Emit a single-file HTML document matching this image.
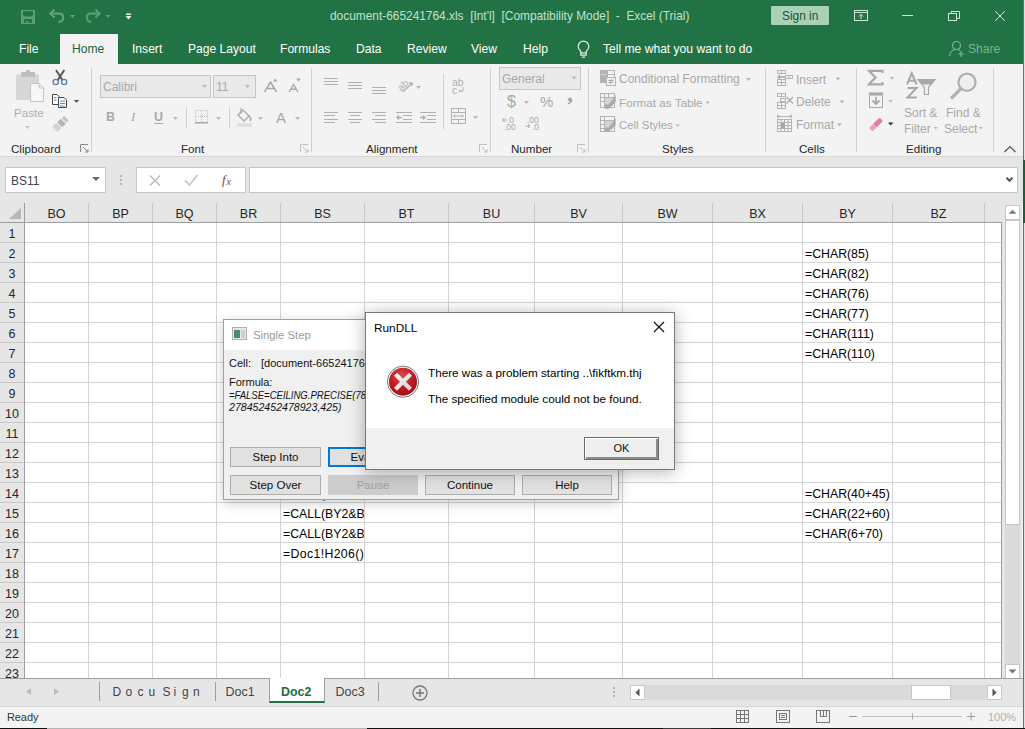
<!DOCTYPE html>
<html><head><meta charset="utf-8">
<style>
*{margin:0;padding:0;box-sizing:border-box}
html,body{width:1025px;height:729px;overflow:hidden;background:#f3f3f3;font-family:"Liberation Sans",sans-serif;position:relative}
.a{position:absolute;white-space:nowrap}
.tt{color:#fff;font-size:12.5px;top:42px}
.gl{font-size:11.5px;color:#262626}
.dis{color:#a6a6a6;font-size:12px}
.rn{left:0;width:24px;height:20px;font-size:12.5px;color:#262626;text-align:center;line-height:20px}
.cn{top:204px;height:20px;font-size:12.5px;color:#262626;text-align:center;line-height:20px}
.cell{font-size:12.3px;color:#000;line-height:20px;height:20px}
.sep{top:68px;width:1px;height:84px;background:#d0d0d0}
.gl{top:141.5px;font-size:11.6px;color:#262626}
.dis{color:#a8a8a8;font-size:12px}
.tt{font-size:12.1px;top:42px}
.tab{top:685px;font-size:12px;color:#444}
.dlg{font-size:11px;color:#111}
.btn{height:20px;background:#e1e1e1;border:1px solid #adadad;font-size:11.5px;color:#111;text-align:center;line-height:18px}

</style></head><body>
<!-- ===== title bar ===== -->
<div class="a" style="left:0;top:0;width:1023px;height:64px;background:#217346"></div>
<svg class="a" style="left:0;top:0" width="140" height="34">
 <path fill-rule="evenodd" fill="#5c9f77" d="M21 10 H35 V24 H21 Z M23 11.3 H33 V15.3 L32 16.5 H24 L23 15.3 Z M24 19 H32 V22.8 H28.2 V21 H26.2 V22.8 H24 Z"/>
 <path d="M50.5 13.5 H59 Q63.2 13.5 63.2 17.5 Q63.2 21.5 58.5 22" fill="none" stroke="#62a67d" stroke-width="1.9"/>
 <path d="M54.5 9.5 L50.3 13.5 L54.5 17.5" fill="none" stroke="#62a67d" stroke-width="1.9"/>
 <path d="M70 15 h5 l-2.5 3z" fill="#62a67d"/>
 <path d="M99.5 13.5 H91 Q86.8 13.5 86.8 17.5 Q86.8 21.5 91.5 22" fill="none" stroke="#5c9f77" stroke-width="1.9"/>
 <path d="M95.5 9.5 L99.7 13.5 L95.5 17.5" fill="none" stroke="#5c9f77" stroke-width="1.9"/>
 <path d="M105.8 15 h5 l-2.5 3z" fill="#5c9f77"/>
 <rect x="126" y="13.5" width="5" height="1.3" fill="#fff"/>
 <path d="M125.5 16 h6 l-3 3.5z" fill="#fff"/>
</svg>
<div class="a" style="left:330px;top:9px;font-size:11.9px;color:#c4e0cc">document-665241764.xls&nbsp; [Int'l]&nbsp; [Compatibility Mode]&nbsp; -&nbsp; Excel (Trial)</div>
<div class="a" style="left:771px;top:6px;width:58px;height:19px;background:#a8d1b6;border-radius:1px"></div>
<div class="a" style="left:782px;top:9px;font-size:11.9px;color:#1f5234">Sign in</div>
<svg class="a" style="left:840px;top:0" width="182" height="34">
 <g fill="none" stroke="#cfe5d7" stroke-width="1">
  <rect x="14.5" y="10.5" width="13" height="10"/>
  <path d="M14.5 12.5 H27.5"/>
  <path d="M21 19 V14.5 M18.8 16.5 L21 14.3 L23.2 16.5"/>
  <path d="M62 15.5 H73"/>
  <rect x="108.5" y="13.5" width="8" height="7"/>
  <path d="M111 13.5 V11.5 H119.5 V18.5 H116.5"/>
  <path d="M155 11 L165 21 M165 11 L155 21"/>
 </g>
</svg>
<!-- tabs -->
<div class="a" style="left:60px;top:34px;width:58px;height:31px;background:#f3f3f3"></div>
<div class="a tt" style="left:19px">File</div>
<div class="a tt" style="left:72px;color:#235f3d">Home</div>
<div class="a tt" style="left:132px">Insert</div>
<div class="a tt" style="left:188px">Page Layout</div>
<div class="a tt" style="left:280px">Formulas</div>
<div class="a tt" style="left:356px">Data</div>
<div class="a tt" style="left:407px">Review</div>
<div class="a tt" style="left:471px">View</div>
<div class="a tt" style="left:523px">Help</div>
<svg class="a" style="left:574px;top:38px" width="20" height="22">
 <path d="M6.8 13.5 C5.3 12 4.2 10.5 4.2 8.5 A5.3 5.3 0 0 1 14.8 8.5 C14.8 10.5 13.7 12 12.2 13.5 V14.8 H6.8 Z M6.8 14.8 V17.2 H12.2 V14.8 M8 19.2 H11" fill="none" stroke="#dff2e5" stroke-width="1.2"/>
</svg>
<div class="a tt" style="left:603px">Tell me what you want to do</div>
<svg class="a" style="left:948px;top:40px" width="18" height="18">
 <circle cx="8.5" cy="5.5" r="4" fill="none" stroke="#7fb293" stroke-width="1.2"/>
 <path d="M1.5 16 C2 11.5 5 9.5 8.5 9.5 C10 9.5 11 9.8 12 10.5 M13 11 V17 M10 14 H16" fill="none" stroke="#7fb293" stroke-width="1.2"/>
</svg>
<div class="a tt" style="left:968px;color:#7fb293">Share</div>

<!-- ===== ribbon ===== -->
<div class="a" style="left:0;top:64px;width:1023px;height:93px;background:#f3f3f3;border-bottom:1px solid #d6d6d6"></div>
<!-- group separators -->
<div class="a sep" style="left:91px"></div>
<div class="a sep" style="left:311px"></div>
<div class="a sep" style="left:490px"></div>
<div class="a sep" style="left:588px"></div>
<div class="a sep" style="left:765px"></div>
<div class="a sep" style="left:856px"></div>
<div class="a sep" style="left:993px"></div>
<!-- group labels -->
<div class="a gl" style="left:11px">Clipboard</div>
<div class="a gl" style="left:181px">Font</div>
<div class="a gl" style="left:366px">Alignment</div>
<div class="a gl" style="left:511px">Number</div>
<div class="a gl" style="left:662px">Styles</div>
<div class="a gl" style="left:799px">Cells</div>
<div class="a gl" style="left:906px">Editing</div>
<!-- launchers -->
<svg class="a" style="left:0;top:140px" width="600" height="16">
 <g fill="none" stroke="#8a8a8a" stroke-width="1">
  <path d="M80.5 12 V4.5 H88"/><path d="M83 7 L88 12 M85 12 H88 V9"/>
  <path d="M300.5 12 V4.5 H308" stroke="#c0c0c0"/><path d="M303 7 L308 12 M305 12 H308 V9" stroke="#c0c0c0"/>
  <path d="M479.5 12 V4.5 H487" stroke="#c0c0c0"/><path d="M482 7 L487 12 M484 12 H487 V9" stroke="#c0c0c0"/>
  <path d="M577.5 12 V4.5 H585" stroke="#c0c0c0"/><path d="M580 7 L585 12 M582 12 H585 V9" stroke="#c0c0c0"/>
 </g>
</svg>
<svg class="a" style="left:1000px;top:142px" width="20" height="14"><path d="M4.5 10 L10 4.5 L15.5 10" fill="none" stroke="#555" stroke-width="1.2"/></svg>

<!-- clipboard group -->
<svg class="a" style="left:0;top:64px" width="92" height="80">
 <rect x="16" y="10" width="23" height="26" rx="2" fill="#d6d6d6"/>
 <rect x="21" y="8" width="14" height="5" rx="1" fill="#bdbdbd"/>
 <rect x="26" y="6" width="4" height="3" rx="1" fill="#bdbdbd"/>
 <path d="M30.5 19.5 H39 L43.5 24 V37.5 H30.5 Z" fill="#f7f7f7" stroke="#c4c4c4"/>
 <path d="M39 19.5 V24 H43.5" fill="none" stroke="#c4c4c4"/>
 <path d="M25 62 h5 l-2.5 3z" fill="#c4c4c4"/>
 <!-- scissors -->
 <path d="M56 6 L61.5 14.5 L62.5 16.5 M64.3 6 L58.8 14.5 L57.8 16.5" stroke="#555" stroke-width="1.9" fill="none"/>
 <circle cx="55.7" cy="18" r="2.6" fill="none" stroke="#5b82ad" stroke-width="1.4"/>
 <circle cx="64.1" cy="18" r="2.6" fill="none" stroke="#5b82ad" stroke-width="1.4"/>
 <!-- copy -->
 <path d="M52.5 30.5 H57 L59 32.5 V40.5 H52.5 Z" fill="#fff" stroke="#444"/>
 <path d="M58.5 33.5 H64 L66.5 36 V43.5 H58.5 Z" fill="#fff" stroke="#444"/>
 <path d="M54 33.5 H56.5 M54 36 H56.5" stroke="#4f81bd" stroke-width="1"/>
 <path d="M60 37 H65 M60 39.5 H65 M60 42 H65" stroke="#4f81bd" stroke-width="0.9"/>
 <path d="M74 36 h5 l-2.5 2.8z" fill="#444"/>
 <!-- format painter -->
 <path d="M63 53 L67.5 57.5" stroke="#c4c4c4" stroke-width="3.2"/>
 <path d="M59 56.5 L64 61.5" stroke="#b4b4b4" stroke-width="5"/>
 <path d="M54 61 L59.5 66.5 L57 68 L52.5 63.5 Z" fill="#d8d8d8"/>
 <path d="M56.5 59 L61.5 64 L58.5 66.5 L53.5 61.5 Z" fill="#d0d0d0"/>
</svg>
<div class="a dis" style="left:14px;top:106px;font-size:11.6px;color:#b0b0b0">Paste</div>

<!-- font group -->
<div class="a" style="left:100px;top:75px;width:111px;height:23px;background:#e9e9e9;border:1px solid #c6c6c6"></div>
<div class="a dis" style="left:103px;top:80px">Calibri</div>
<div class="a" style="left:213px;top:75px;width:43px;height:23px;background:#e9e9e9;border:1px solid #c6c6c6"></div>
<div class="a dis" style="left:216px;top:80px">11</div>
<svg class="a" style="left:92px;top:64px" width="220" height="80">
 <g fill="#b8b8b8">
  <path d="M110 21 h5 l-2.5 3z"/><path d="M153 21 h5 l-2.5 3z"/>
 </g>
 <path d="M172.5 28 L178.5 18 L184.5 28 M174.8 24.5 H182.2" fill="none" stroke="#a8a8a8" stroke-width="1.6"/>
 <path d="M181 17.5 h4.5 l-2.25 -3z" fill="#a8a8a8"/>
 <path d="M197 28 L201.5 20.5 L206 28 M198.7 25.3 H204.3" fill="none" stroke="#a8a8a8" stroke-width="1.4"/>
 <path d="M204 14.5 h5 l-2.5 3z" fill="#a8a8a8"/>
 <text x="14" y="57" font-family="Liberation Sans" font-size="12.5" font-weight="bold" fill="#a8a8a8">B</text>
 <text x="39" y="57" font-family="Liberation Serif" font-size="13" font-style="italic" fill="#a8a8a8">I</text>
 <text x="62" y="57" font-family="Liberation Sans" font-size="12.5" font-weight="bold" fill="#a8a8a8">U</text>
 <rect x="62" y="59" width="9" height="1" fill="#a8a8a8"/>
 <path d="M81 53 h5 l-2.5 3z" fill="#b8b8b8"/>
 <rect x="94" y="43" width="1" height="21" fill="#d0d0d0"/>
 <rect x="103.5" y="46.5" width="12" height="12" fill="none" stroke="#c0c0c0" stroke-dasharray="1 1"/>
 <path d="M109.5 47 V58 M104 52.5 H115" stroke="#c0c0c0" stroke-dasharray="1 1"/>
 <rect x="103" y="58" width="13" height="1.5" fill="#a8a8a8"/>
 <path d="M124 53 h5 l-2.5 3z" fill="#b8b8b8"/>
 <rect x="137" y="43" width="1" height="21" fill="#d0d0d0"/>
 <path d="M146 51 L151 46 L157 52 L152 57 Z" fill="none" stroke="#a8a8a8" stroke-width="1.3"/>
 <path d="M149 44 V50" stroke="#a8a8a8" stroke-width="1.2"/>
 <path d="M157 52 Q160 55 158 57" fill="none" stroke="#a8a8a8" stroke-width="1.5"/>
 <rect x="145" y="59" width="15" height="4" fill="#e0e0e0"/>
 <path d="M166 53 h5 l-2.5 3z" fill="#b8b8b8"/>
 <text x="184" y="59" font-family="Liberation Sans" font-size="15" fill="#a8a8a8">A</text>
 <path d="M203 53 h5 l-2.5 3z" fill="#b8b8b8"/>
</svg>

<!-- alignment group -->
<svg class="a" style="left:312px;top:64px" width="178" height="80">
 <g stroke="#b0b0b0" stroke-width="1" fill="none">
  <path d="M12 14.5 H26 M12 17.5 H26 M12 20.5 H26"/>
  <path d="M36 18.5 H50 M36 21.5 H50 M36 24.5 H50"/>
  <path d="M60 23.5 H74 M60 26.5 H74 M60 29.5 H74"/>
  <path d="M12 48.5 H26 M12 51.5 H23 M12 55.5 H26 M12 58.5 H23"/>
  <path d="M36 48.5 H50 M38 51.5 H48 M36 55.5 H50 M38 58.5 H48"/>
  <path d="M60 48.5 H74 M63 51.5 H74 M60 55.5 H74 M63 58.5 H74"/>
  <path d="M84 48.5 H100 M91 51.5 H100 M91 55.5 H100 M84 58.5 H100"/>
  <path d="M108 48.5 H124 M115 51.5 H124 M115 55.5 H124 M108 58.5 H124"/>
  <path d="M85 53.5 H90 M87 51.5 L85 53.5 L87 55.5" stroke-width="1.4"/>
  <path d="M108 53.5 H113 M111 51.5 L113 53.5 L111 55.5" stroke-width="1.4"/>
  <path d="M91 28 L100 19 M97 19 H100 V22" stroke-width="1.4"/>
  <rect x="139.5" y="44.5" width="14" height="15"/>
  <path d="M139.5 48.5 H153.5 M139.5 55.5 H153.5 M146.5 44.5 V48.5 M146.5 55.5 V59.5 M142 52 H151 M143 50.5 L141.5 52 L143 53.5 M150 50.5 L151.5 52 L150 53.5"/>
  <rect x="131" y="10" width="1" height="55" stroke="none" fill="#d0d0d0"/>
 </g>
 <text x="84" y="25" font-family="Liberation Sans" font-size="10" fill="#b0b0b0" transform="rotate(-45 90 20)">ab</text>
 <path d="M104 22 h5 l-2.5 3z" fill="#b8b8b8"/>
 <text x="140" y="22" font-family="Liberation Sans" font-size="10.5" fill="#b0b0b0">ab</text>
 <text x="140" y="30" font-family="Liberation Sans" font-size="10.5" fill="#b0b0b0">c</text>
 <path d="M151 23 V27 H147 M148.5 25.5 L147 27 L148.5 28.5" fill="none" stroke="#b0b0b0" stroke-width="1"/>
 <path d="M161 52 h5 l-2.5 3z" fill="#b8b8b8"/>
</svg>

<!-- number group -->
<div class="a" style="left:499px;top:67px;width:82px;height:23px;background:#e9e9e9;border:1px solid #c6c6c6"></div>
<div class="a dis" style="left:502px;top:72px">General</div>
<svg class="a" style="left:490px;top:64px" width="98" height="80">
 <path d="M81.5 12.5 h5 l-2.5 3z" fill="#b8b8b8"/>
 <text x="17" y="43" font-family="Liberation Sans" font-size="16" fill="#a8a8a8">$</text>
 <path d="M34 37 h5 l-2.5 3z" fill="#b8b8b8"/>
 <text x="50" y="42.5" font-family="Liberation Sans" font-size="15" fill="#a8a8a8">%</text>
 <circle cx="80" cy="35.6" r="2.1" fill="#a8a8a8"/><path d="M81.8 36 Q81.5 38.8 77.8 39.8" fill="none" stroke="#a8a8a8" stroke-width="1.5"/>
 <text x="17" y="59" font-family="Liberation Sans" font-size="8.5" fill="#a8a8a8">.0</text>
 <text x="14" y="65.5" font-family="Liberation Sans" font-size="8.5" fill="#a8a8a8">.00</text>
 <path d="M12.5 56 H17 M14.5 54 L12.5 56 L14.5 58" fill="none" stroke="#a8a8a8"/>
 <text x="37" y="59" font-family="Liberation Sans" font-size="8.5" fill="#a8a8a8">.00</text>
 <text x="42" y="65.5" font-family="Liberation Sans" font-size="8.5" fill="#a8a8a8">.0</text>
 <path d="M35.5 62 H40 M38 60 L40 62 L38 64" fill="none" stroke="#a8a8a8"/>
</svg>

<!-- styles group -->
<svg class="a" style="left:596px;top:64px" width="24" height="72">
 <g fill="none" stroke="#b4b4b4" stroke-width="1">
  <rect x="4.5" y="6.5" width="14" height="12"/>
  <path d="M11.5 6.5 V18.5 M4.5 10.5 H18.5 M4.5 14.5 H11"/>
 </g>
 <rect x="4" y="6" width="7" height="13" fill="#b4b4b4"/>
 <rect x="5" y="10" width="5" height="1" fill="#d8d8d8"/>
 <rect x="10.5" y="13.5" width="9" height="8" fill="#f3f3f3" stroke="#b4b4b4"/>
 <path d="M12.5 16.5 H17.5 M12.5 18.5 H17.5 M16 15 L14 20" stroke="#a0a0a0" stroke-width="0.9" fill="none"/>
 <g fill="none" stroke="#b4b4b4">
  <rect x="4.5" y="29.5" width="14" height="14"/>
  <path d="M4.5 33.5 H18.5 M4.5 37.5 H18.5 M8.5 29.5 V43.5 M12.5 29.5 V43.5"/>
  <rect x="4.5" y="52.5" width="14" height="15"/>
  <path d="M4.5 56.5 H18.5 M4.5 60.5 H14 M4.5 64.5 H10 M8.5 52.5 V67.5"/>
 </g>
 <rect x="9" y="34" width="8" height="8" fill="#d4d4d4"/>
 <rect x="9" y="57" width="8" height="8" fill="#d4d4d4"/>
 <path d="M19.7 31 V38 L13 44.8 H9.5 Z" fill="#ababab"/>
 <circle cx="10.5" cy="42.5" r="2.3" fill="#ababab"/>
 <path d="M19.7 54 V61 L13 67.8 H9.5 Z" fill="#ababab"/>
 <circle cx="10.5" cy="65.5" r="2.3" fill="#ababab"/>
</svg>
<div class="a dis" style="left:619px;top:72px">Conditional Formatting</div>
<div class="a dis" style="left:619px;top:96px;font-size:11.7px">Format as Table</div>
<div class="a dis" style="left:619px;top:119px;font-size:11.4px">Cell Styles</div>
<svg class="a" style="left:600px;top:64px" width="160" height="72">
 <g fill="#b8b8b8">
  <path d="M146 14 h5 l-2.5 3z"/><path d="M105.5 37.5 h4.5 l-2.25 2.6z"/><path d="M75.5 60.5 h4.5 l-2.25 2.6z"/>
 </g>
</svg>

<!-- cells group -->
<svg class="a" style="left:772px;top:64px" width="84" height="72">
 <g fill="none" stroke="#b4b4b4" stroke-width="1">
  <rect x="5.5" y="6.5" width="8" height="3"/><path d="M9.5 6.5 V9.5"/>
  <rect x="5.5" y="15.5" width="8" height="6"/><path d="M9.5 15.5 V21.5 M5.5 18.5 H13.5"/>
  <rect x="13.5" y="11.5" width="7" height="3"/><path d="M17 11.5 V14.5"/>
  <path d="M6 13 H13 M8 11 L6 13 L8 15" stroke="#a8a8a8" stroke-width="1.3"/>
  <rect x="5.5" y="29.5" width="8" height="3"/><path d="M9.5 29.5 V32.5"/>
  <rect x="8.5" y="34.5" width="5" height="3"/>
  <rect x="5.5" y="38.5" width="8" height="6"/><path d="M9.5 38.5 V44.5 M5.5 41.5 H13.5"/>
  <path d="M14.5 33 L21 39.5 M21 33 L14.5 39.5" stroke="#a8a8a8" stroke-width="1.2"/>
  <rect x="5.5" y="55.5" width="14" height="12"/>
  <path d="M5.5 58.5 H19.5 M5.5 61.5 H19.5 M5.5 64.5 H19.5 M9 55.5 V67.5 M12.5 55.5 V67.5 M16 55.5 V67.5"/>
  <path d="M6 52.5 H19 M5.5 50.5 V54 M19.5 50.5 V54 M7.5 51 L6 52.5 L7.5 54 M17.5 51 L19 52.5 L17.5 54"/>
 </g>
 <rect x="9" y="58.5" width="4" height="6" fill="#a8a8a8"/>
</svg>
<div class="a dis" style="left:796px;top:73px">Insert</div>
<div class="a dis" style="left:796px;top:95px">Delete</div>
<div class="a dis" style="left:796px;top:118px">Format</div>
<svg class="a" style="left:830px;top:64px" width="24" height="72">
 <g fill="#b8b8b8"><path d="M5.5 13.5 h5 l-2.5 3z"/><path d="M9.5 36.5 h5 l-2.5 3z"/><path d="M7 59.5 h5 l-2.5 3z"/></g>
</svg>

<!-- editing group -->
<svg class="a" style="left:860px;top:64px" width="134" height="72">
 <path d="M22.5 9 V6.8 H9 L15.5 13.5 L9 20.3 H22.5 V18" fill="none" stroke="#a8a8a8" stroke-width="2.2"/>
 <path d="M29.5 13 h5 l-2.5 2.8z" fill="#bdbdbd"/>
 <rect x="9.5" y="29.5" width="13" height="14" fill="none" stroke="#a8a8a8"/>
 <rect x="9" y="28.5" width="14" height="3" fill="#a8a8a8"/>
 <path d="M16 33 V40 M12.5 36.5 L16 40 L19.5 36.5" fill="none" stroke="#a8a8a8" stroke-width="1.8"/>
 <path d="M28 36 h5 l-2.5 2.8z" fill="#bdbdbd"/>
 <path d="M13 60 L18.5 54.5 Q19.5 53.5 20.5 54.5 L22 56 Q23 57 22 58 L16.5 63.5 Z" fill="#e07f98"/>
 <path d="M13 60 L16.5 63.5 L13.5 66.5 Q12.5 67.5 11.5 66.5 L10 65 Q9 64 10 63 Z" fill="#eda3b5"/>
 <path d="M28 58.5 h5.5 l-2.75 3z" fill="#333"/>
 <path d="M47 20.5 L51.8 9.3 L56.6 20.5 M48.6 16.8 H55" fill="none" stroke="#a8a8a8" stroke-width="2"/>
 <path d="M47.5 24 H56.5 L47.5 33.5 H56.8" fill="none" stroke="#a8a8a8" stroke-width="2"/>
 <path d="M58 15.7 H75 L68.5 23.5 V30.5 H64.5 V23.5 Z" fill="#f3f3f3" stroke="#a8a8a8" stroke-width="1.2"/>
 <path d="M58 15.7 H75 L71 20.5 H62 Z" fill="#a8a8a8"/>
 <circle cx="107" cy="18.2" r="8.6" fill="#f1edf1" stroke="#b0b0b0" stroke-width="2.2"/>
 <path d="M100.5 25 L92 33.5" stroke="#b0b0b0" stroke-width="3.2" stroke-linecap="round"/>
</svg>
<div class="a dis" style="left:904px;top:106px">Sort &amp;</div>
<div class="a dis" style="left:904px;top:122px">Filter</div>
<div class="a dis" style="left:946px;top:106px">Find &amp;</div>
<div class="a dis" style="left:944px;top:122px">Select</div>
<svg class="a" style="left:900px;top:120px" width="90" height="16"><g fill="#bdbdbd"><path d="M33.5 7 h4.5 l-2.25 2.6z"/><path d="M78.5 7 h4.5 l-2.25 2.6z"/></g></svg>

<!-- ===== formula bar ===== -->
<div class="a" style="left:0;top:157px;width:1023px;height:46px;background:#e6e6e6"></div>
<div class="a" style="left:5px;top:167px;width:101px;height:26px;background:#fff;border:1px solid #c6c6c6"></div>
<div class="a" style="left:11px;top:174px;font-size:12px;color:#444">BS11</div>
<svg class="a" style="left:88px;top:172px" width="16" height="14"><path d="M4 5 h8 l-4 4z" fill="#666"/></svg>
<svg class="a" style="left:116px;top:170px" width="10" height="20"><g fill="#b4b4b4"><rect x="4" y="5" width="2" height="2"/><rect x="4" y="9" width="2" height="2"/><rect x="4" y="13" width="2" height="2"/></g></svg>
<div class="a" style="left:136px;top:167px;width:110px;height:26px;background:#fff;border:1px solid #c6c6c6"></div>
<svg class="a" style="left:136px;top:167px" width="110" height="26">
 <path d="M14 8.5 L24 18.5 M24 8.5 L14 18.5" stroke="#b8b8b8" stroke-width="1.3"/>
 <path d="M49 13.5 L53.5 18 L61.5 8" fill="none" stroke="#c8c8c8" stroke-width="1.8"/>
 <text x="86" y="17" font-family="Liberation Serif" font-size="13" font-style="italic" fill="#555">f</text>
 <text x="90.5" y="18" font-family="Liberation Serif" font-size="10" font-style="italic" fill="#555">x</text>
</svg>
<div class="a" style="left:249px;top:167px;width:769px;height:26px;background:#fff;border:1px solid #c6c6c6"></div>
<svg class="a" style="left:1000px;top:172px" width="16" height="16"><path d="M6.5 5.8 L9.5 8.8 L12.5 5.8" fill="none" stroke="#555" stroke-width="2"/></svg>
<div class="a" style="left:0;top:203px;width:1002px;height:477px;background:#fff"></div>
<div class="a" style="left:0;top:203px;width:1002px;height:20px;background:#e6e6e6"></div>
<div class="a" style="left:0;top:223px;width:24px;height:460px;background:#e6e6e6"></div>
<div class="a" style="left:25px;top:242px;width:976px;height:1px;background:#d4d4d4"></div>
<div class="a" style="left:0;top:242px;width:24px;height:1px;background:#c8c8c8"></div>
<div class="a rn" style="top:224px">1</div>
<div class="a" style="left:25px;top:262px;width:976px;height:1px;background:#d4d4d4"></div>
<div class="a" style="left:0;top:262px;width:24px;height:1px;background:#c8c8c8"></div>
<div class="a rn" style="top:244px">2</div>
<div class="a" style="left:25px;top:282px;width:976px;height:1px;background:#d4d4d4"></div>
<div class="a" style="left:0;top:282px;width:24px;height:1px;background:#c8c8c8"></div>
<div class="a rn" style="top:264px">3</div>
<div class="a" style="left:25px;top:302px;width:976px;height:1px;background:#d4d4d4"></div>
<div class="a" style="left:0;top:302px;width:24px;height:1px;background:#c8c8c8"></div>
<div class="a rn" style="top:284px">4</div>
<div class="a" style="left:25px;top:322px;width:976px;height:1px;background:#d4d4d4"></div>
<div class="a" style="left:0;top:322px;width:24px;height:1px;background:#c8c8c8"></div>
<div class="a rn" style="top:304px">5</div>
<div class="a" style="left:25px;top:342px;width:976px;height:1px;background:#d4d4d4"></div>
<div class="a" style="left:0;top:342px;width:24px;height:1px;background:#c8c8c8"></div>
<div class="a rn" style="top:324px">6</div>
<div class="a" style="left:25px;top:362px;width:976px;height:1px;background:#d4d4d4"></div>
<div class="a" style="left:0;top:362px;width:24px;height:1px;background:#c8c8c8"></div>
<div class="a rn" style="top:344px">7</div>
<div class="a" style="left:25px;top:382px;width:976px;height:1px;background:#d4d4d4"></div>
<div class="a" style="left:0;top:382px;width:24px;height:1px;background:#c8c8c8"></div>
<div class="a rn" style="top:364px">8</div>
<div class="a" style="left:25px;top:402px;width:976px;height:1px;background:#d4d4d4"></div>
<div class="a" style="left:0;top:402px;width:24px;height:1px;background:#c8c8c8"></div>
<div class="a rn" style="top:384px">9</div>
<div class="a" style="left:25px;top:422px;width:976px;height:1px;background:#d4d4d4"></div>
<div class="a" style="left:0;top:422px;width:24px;height:1px;background:#c8c8c8"></div>
<div class="a rn" style="top:404px">10</div>
<div class="a" style="left:25px;top:442px;width:976px;height:1px;background:#d4d4d4"></div>
<div class="a" style="left:0;top:442px;width:24px;height:1px;background:#c8c8c8"></div>
<div class="a rn" style="top:424px">11</div>
<div class="a" style="left:25px;top:462px;width:976px;height:1px;background:#d4d4d4"></div>
<div class="a" style="left:0;top:462px;width:24px;height:1px;background:#c8c8c8"></div>
<div class="a rn" style="top:444px">12</div>
<div class="a" style="left:25px;top:482px;width:976px;height:1px;background:#d4d4d4"></div>
<div class="a" style="left:0;top:482px;width:24px;height:1px;background:#c8c8c8"></div>
<div class="a rn" style="top:464px">13</div>
<div class="a" style="left:25px;top:502px;width:976px;height:1px;background:#d4d4d4"></div>
<div class="a" style="left:0;top:502px;width:24px;height:1px;background:#c8c8c8"></div>
<div class="a rn" style="top:484px">14</div>
<div class="a" style="left:25px;top:522px;width:976px;height:1px;background:#d4d4d4"></div>
<div class="a" style="left:0;top:522px;width:24px;height:1px;background:#c8c8c8"></div>
<div class="a rn" style="top:504px">15</div>
<div class="a" style="left:25px;top:542px;width:976px;height:1px;background:#d4d4d4"></div>
<div class="a" style="left:0;top:542px;width:24px;height:1px;background:#c8c8c8"></div>
<div class="a rn" style="top:524px">16</div>
<div class="a" style="left:25px;top:562px;width:976px;height:1px;background:#d4d4d4"></div>
<div class="a" style="left:0;top:562px;width:24px;height:1px;background:#c8c8c8"></div>
<div class="a rn" style="top:544px">17</div>
<div class="a" style="left:25px;top:582px;width:976px;height:1px;background:#d4d4d4"></div>
<div class="a" style="left:0;top:582px;width:24px;height:1px;background:#c8c8c8"></div>
<div class="a rn" style="top:564px">18</div>
<div class="a" style="left:25px;top:602px;width:976px;height:1px;background:#d4d4d4"></div>
<div class="a" style="left:0;top:602px;width:24px;height:1px;background:#c8c8c8"></div>
<div class="a rn" style="top:584px">19</div>
<div class="a" style="left:25px;top:622px;width:976px;height:1px;background:#d4d4d4"></div>
<div class="a" style="left:0;top:622px;width:24px;height:1px;background:#c8c8c8"></div>
<div class="a rn" style="top:604px">20</div>
<div class="a" style="left:25px;top:642px;width:976px;height:1px;background:#d4d4d4"></div>
<div class="a" style="left:0;top:642px;width:24px;height:1px;background:#c8c8c8"></div>
<div class="a rn" style="top:624px">21</div>
<div class="a" style="left:25px;top:662px;width:976px;height:1px;background:#d4d4d4"></div>
<div class="a" style="left:0;top:662px;width:24px;height:1px;background:#c8c8c8"></div>
<div class="a rn" style="top:644px">22</div>
<div class="a" style="left:25px;top:682px;width:976px;height:1px;background:#d4d4d4"></div>
<div class="a" style="left:0;top:682px;width:24px;height:1px;background:#c8c8c8"></div>
<div class="a rn" style="top:664px">23</div>
<div class="a" style="left:88px;top:223px;width:1px;height:455px;background:#d4d4d4"></div>
<div class="a" style="left:88px;top:203px;width:1px;height:20px;background:#c8c8c8"></div>
<div class="a cn" style="left:25px;width:63px">BO</div>
<div class="a" style="left:152px;top:223px;width:1px;height:455px;background:#d4d4d4"></div>
<div class="a" style="left:152px;top:203px;width:1px;height:20px;background:#c8c8c8"></div>
<div class="a cn" style="left:89px;width:63px">BP</div>
<div class="a" style="left:216px;top:223px;width:1px;height:455px;background:#d4d4d4"></div>
<div class="a" style="left:216px;top:203px;width:1px;height:20px;background:#c8c8c8"></div>
<div class="a cn" style="left:153px;width:63px">BQ</div>
<div class="a" style="left:280px;top:223px;width:1px;height:455px;background:#d4d4d4"></div>
<div class="a" style="left:280px;top:203px;width:1px;height:20px;background:#c8c8c8"></div>
<div class="a cn" style="left:217px;width:63px">BR</div>
<div class="a" style="left:364px;top:223px;width:1px;height:455px;background:#d4d4d4"></div>
<div class="a" style="left:364px;top:203px;width:1px;height:20px;background:#c8c8c8"></div>
<div class="a cn" style="left:281px;width:83px">BS</div>
<div class="a" style="left:448px;top:223px;width:1px;height:455px;background:#d4d4d4"></div>
<div class="a" style="left:448px;top:203px;width:1px;height:20px;background:#c8c8c8"></div>
<div class="a cn" style="left:365px;width:83px">BT</div>
<div class="a" style="left:534px;top:223px;width:1px;height:455px;background:#d4d4d4"></div>
<div class="a" style="left:534px;top:203px;width:1px;height:20px;background:#c8c8c8"></div>
<div class="a cn" style="left:449px;width:85px">BU</div>
<div class="a" style="left:622px;top:223px;width:1px;height:455px;background:#d4d4d4"></div>
<div class="a" style="left:622px;top:203px;width:1px;height:20px;background:#c8c8c8"></div>
<div class="a cn" style="left:535px;width:87px">BV</div>
<div class="a" style="left:712px;top:223px;width:1px;height:455px;background:#d4d4d4"></div>
<div class="a" style="left:712px;top:203px;width:1px;height:20px;background:#c8c8c8"></div>
<div class="a cn" style="left:623px;width:89px">BW</div>
<div class="a" style="left:802px;top:223px;width:1px;height:455px;background:#d4d4d4"></div>
<div class="a" style="left:802px;top:203px;width:1px;height:20px;background:#c8c8c8"></div>
<div class="a cn" style="left:713px;width:89px">BX</div>
<div class="a" style="left:892px;top:223px;width:1px;height:455px;background:#d4d4d4"></div>
<div class="a" style="left:892px;top:203px;width:1px;height:20px;background:#c8c8c8"></div>
<div class="a cn" style="left:803px;width:89px">BY</div>
<div class="a" style="left:984px;top:223px;width:1px;height:455px;background:#d4d4d4"></div>
<div class="a" style="left:984px;top:203px;width:1px;height:20px;background:#c8c8c8"></div>
<div class="a cn" style="left:893px;width:91px">BZ</div>
<div class="a" style="left:0;top:222px;width:1002px;height:1px;background:#9e9e9e"></div>
<div class="a" style="left:24px;top:203px;width:1px;height:480px;background:#9e9e9e"></div>
<div class="a" style="left:1001px;top:223px;width:1px;height:460px;background:#9e9e9e"></div>
<svg class="a" style="left:8px;top:208px" width="14" height="12"><polygon points="13,0 13,11 1,11" fill="#b8b8b8"/></svg>
<div class="a cell" style="left:805px;top:244px">=CHAR(85)</div>
<div class="a cell" style="left:805px;top:264px">=CHAR(82)</div>
<div class="a cell" style="left:805px;top:284px">=CHAR(76)</div>
<div class="a cell" style="left:805px;top:304px">=CHAR(77)</div>
<div class="a cell" style="left:805px;top:324px">=CHAR(111)</div>
<div class="a cell" style="left:805px;top:344px">=CHAR(110)</div>
<div class="a cell" style="left:805px;top:484px">=CHAR(40+45)</div>
<div class="a cell" style="left:805px;top:504px">=CHAR(22+60)</div>
<div class="a cell" style="left:805px;top:524px">=CHAR(6+70)</div>
<div class="a cell" style="left:283px;top:484px;width:81px;overflow:hidden">=CALL(BY2&amp;B</div>
<div class="a cell" style="left:283px;top:504px;width:81px;overflow:hidden">=CALL(BY2&amp;B</div>
<div class="a cell" style="left:283px;top:524px;width:81px;overflow:hidden">=CALL(BY2&amp;B</div>
<div class="a cell" style="left:283px;top:544px;width:81px;overflow:hidden"><span style="letter-spacing:0.35px">=Doc1!H206()</span></div>
<!-- ===== scrollbar vertical ===== -->
<div class="a" style="left:1002px;top:203px;width:20px;height:476px;background:#e6e6e6"></div>
<div class="a" style="left:1005px;top:205px;width:15px;height:459px;background:#dadada"></div>
<div class="a" style="left:1005px;top:205px;width:15px;height:15px;background:#fff;border:1px solid #c6c6c6"></div>
<svg class="a" style="left:1005px;top:205px" width="15" height="15"><path d="M3.5 8.8 h8 l-4 -4z" fill="#777"/></svg>
<div class="a" style="left:1005px;top:220px;width:15px;height:305px;background:#fff;border:1px solid #c6c6c6"></div>
<div class="a" style="left:1005px;top:664px;width:15px;height:15px;background:#fff;border:1px solid #c6c6c6"></div>
<svg class="a" style="left:1005px;top:664px" width="15" height="15"><path d="M3.5 5.5 h8 l-4 4z" fill="#777"/></svg>

<!-- ===== sheet tab bar ===== -->
<div class="a" style="left:0;top:678px;width:1023px;height:28px;background:#e6e6e6;border-top:1px solid #9e9e9e"></div>
<svg class="a" style="left:0;top:679px" width="110" height="26">
 <path d="M31 9 V16 L26 12.5 Z" fill="#bdbdbd"/>
 <path d="M54 9 V16 L59 12.5 Z" fill="#bdbdbd"/>
 <rect x="99" y="3" width="1" height="19" fill="#9e9e9e"/>
</svg>
<div class="a tab" style="left:112.6px">D</div><div class="a tab" style="left:125.5px">o</div><div class="a tab" style="left:137.6px">c</div><div class="a tab" style="left:148.5px">u</div><div class="a tab" style="left:162.5px">S</div><div class="a tab" style="left:173.5px">i</div><div class="a tab" style="left:182.0px">g</div><div class="a tab" style="left:193.0px">n</div>
<div class="a" style="left:215px;top:682px;width:1px;height:19px;background:#9e9e9e"></div>
<div class="a tab" style="left:225.5px;font-size:12.5px">Doc1</div>
<div class="a" style="left:269px;top:678px;width:56px;height:25px;background:#fff;border-left:1px solid #9e9e9e;border-right:1px solid #9e9e9e;border-bottom:2px solid #217346"></div>
<div class="a tab" style="left:281px;font-weight:bold;color:#1d6b40;font-size:12.4px">Doc2</div>
<div class="a tab" style="left:335.5px;font-size:12.5px">Doc3</div>
<div class="a" style="left:378px;top:682px;width:1px;height:19px;background:#9e9e9e"></div>
<svg class="a" style="left:410px;top:685px" width="20" height="16">
 <circle cx="10" cy="8" r="7" fill="none" stroke="#777" stroke-width="1.3"/>
 <path d="M10 4 V12 M6 8 H14" stroke="#777" stroke-width="1.5"/>
</svg>
<svg class="a" style="left:610px;top:684px" width="8" height="16"><g fill="#b4b4b4"><rect x="3" y="3" width="2" height="2"/><rect x="3" y="7" width="2" height="2"/><rect x="3" y="11" width="2" height="2"/></g></svg>
<div class="a" style="left:630px;top:685px;width:372px;height:15px;background:#dadada"></div>
<div class="a" style="left:630px;top:685px;width:15px;height:15px;background:#fff;border:1px solid #c6c6c6"></div>
<svg class="a" style="left:630px;top:685px" width="15" height="15"><path d="M9.5 3.5 v8 l-4 -4z" fill="#555"/></svg>
<div class="a" style="left:911px;top:685px;width:40px;height:15px;background:#fff;border:1px solid #c6c6c6"></div>
<div class="a" style="left:987px;top:685px;width:15px;height:15px;background:#fff;border:1px solid #c6c6c6"></div>
<svg class="a" style="left:987px;top:685px" width="15" height="15"><path d="M5.5 3.5 v8 l4 -4z" fill="#555"/></svg>

<!-- ===== status bar ===== -->
<div class="a" style="left:0;top:706px;width:1023px;height:23px;background:#f3f3f3;border-top:1px solid #d6d6d6"></div>
<div class="a" style="left:7px;top:711px;font-size:11px;letter-spacing:-0.1px;color:#333">Ready</div>
<svg class="a" style="left:730px;top:706px" width="260" height="22">
 <g fill="none" stroke="#777" stroke-width="1">
  <rect x="6.5" y="4.5" width="12" height="12"/>
  <path d="M10.5 4.5 V16.5 M14.5 4.5 V16.5 M6.5 8.5 H18.5 M6.5 12.5 H18.5"/>
  <rect x="46.5" y="4.5" width="13" height="12"/>
  <rect x="49.5" y="7.5" width="7" height="6"/>
  <path d="M51 9.5 H55 M51 11.5 H55"/>
  <rect x="86.5" y="4.5" width="13" height="12"/>
  <path d="M90.5 4.5 V10.5 H96.5 V4.5 M93.5 4.5 V10.5"/>
 </g>
 <path d="M119 10.5 H127" stroke="#999" stroke-width="1"/>
 <path d="M132 10.5 H232" stroke="#bdbdbd" stroke-width="1"/>
 <path d="M182.5 7.5 V13.5" stroke="#aaa" stroke-width="1"/>
 <path d="M237 10.5 H245 M241 6.5 V14.5" stroke="#999" stroke-width="1"/>
</svg>
<div class="a" style="left:988px;top:711px;font-size:11px;color:#b0b0b0">100%</div>
<!-- right border / bottom strip -->
<div class="a" style="left:1023px;top:0;width:1px;height:729px;background:#6e6e6e"></div>
<div class="a" style="left:1024px;top:0;width:1px;height:729px;background:#e0e0e0"></div>
<div class="a" style="left:1023px;top:160px;width:2px;height:63px;background:#1f5c3a"></div>
<div class="a" style="left:0;top:728px;width:1025px;height:1px;background:#111"></div>
<div class="a" style="left:47px;top:728px;width:320px;height:1px;background:#b4b4b4"></div>
<div class="a" style="left:663px;top:728px;width:48px;height:1px;background:#3a3a3a"></div>

<!-- ===== Single Step dialog ===== -->
<div class="a" style="left:223px;top:319px;width:396px;height:181px;background:#f0f0f0;border:1px solid #a0a0a0;box-shadow:0 3px 12px rgba(0,0,0,0.2)"></div>
<div class="a" style="left:224px;top:320px;width:394px;height:30px;background:#fff"></div>
<svg class="a" style="left:231px;top:326px" width="18" height="16">
 <rect x="1.5" y="1.5" width="14" height="12" fill="#e8e8e8" stroke="#b0b0b0"/>
 <rect x="3" y="4" width="6" height="8" fill="#4a8a7a"/>
 <rect x="10" y="4" width="4" height="8" fill="#c8d4d0"/>
</svg>
<div class="a" style="left:253px;top:329px;font-size:11.3px;color:#9a9a9a">Single Step</div>
<div class="a dlg" style="left:229px;top:357px">Cell:</div>
<div class="a dlg" style="left:261px;top:357px">[document-665241764.xls]Doc2!BS11</div>
<div class="a dlg" style="left:229px;top:376px">Formula:</div>
<div class="a dlg" style="left:229px;top:389px;font-style:italic;font-size:10.6px;transform:scaleX(0.9);transform-origin:0 0">=FALSE=CEILING.PRECISE(784523451234,</div>
<div class="a dlg" style="left:229px;top:401px;font-style:italic;font-size:10.6px">278452452478923,425)</div>
<div class="a btn" style="left:230px;top:447px;width:91px">Step Into</div>
<div class="a btn" style="left:328px;top:447px;width:90px;border:2px solid #0078d7;line-height:16px">Evaluate</div>
<div class="a btn" style="left:230px;top:475px;width:91px">Step Over</div>
<div class="a btn" style="left:328px;top:475px;width:90px;background:#cccccc;border-color:#cccccc;color:#a0a0a0">Pause</div>
<div class="a btn" style="left:425px;top:475px;width:90px">Continue</div>
<div class="a btn" style="left:522px;top:475px;width:90px">Help</div>

<!-- ===== RunDLL dialog ===== -->
<div class="a" style="left:365px;top:312px;width:310px;height:158px;background:#fff;border:1px solid #777;box-shadow:0 2px 16px rgba(0,0,0,0.3)"></div>
<div class="a" style="left:374px;top:321px;font-size:11.8px;color:#000">RunDLL</div>
<svg class="a" style="left:650px;top:318px" width="18" height="18"><path d="M4 4 L14 14 M14 4 L4 14" stroke="#111" stroke-width="1.2"/></svg>
<svg class="a" style="left:385px;top:364px" width="36" height="36">
 <defs><radialGradient id="rg" cx="0.45" cy="0.3" r="0.75"><stop offset="0" stop-color="#e0484e"/><stop offset="0.6" stop-color="#c01820"/><stop offset="1" stop-color="#9a0c12"/></radialGradient>
 <linearGradient id="xg" x1="0" y1="0" x2="1" y2="1"><stop offset="0" stop-color="#ffffff"/><stop offset="1" stop-color="#d0d0d0"/></linearGradient></defs>
 <circle cx="18" cy="17.7" r="15.6" fill="#fafafa" stroke="#6a6a6a" stroke-width="0.9"/>
 <circle cx="18" cy="17.7" r="14" fill="url(#rg)"/>
 <path d="M10.5 10.2 L25.5 25.2 M25.5 10.2 L10.5 25.2" stroke="url(#xg)" stroke-width="4.2"/>
</svg>
<div class="a dlg" style="left:428px;top:366px;color:#000;font-size:11.7px">There was a problem starting ..\fikftkm.thj</div>
<div class="a dlg" style="left:428px;top:392px;color:#000;font-size:11.7px">The specified module could not be found.</div>
<div class="a" style="left:366px;top:428px;width:308px;height:41px;background:#f0f0f0"></div>
<div class="a btn" style="left:584px;top:437px;width:75px;height:23px;border:1px solid #6a6a6a;box-shadow:inset 1px 1px 0 #fff,inset -2px -2px 0 #8c8c8c;line-height:20px;background:#efefef;font-size:11px">OK</div>
</body></html>
